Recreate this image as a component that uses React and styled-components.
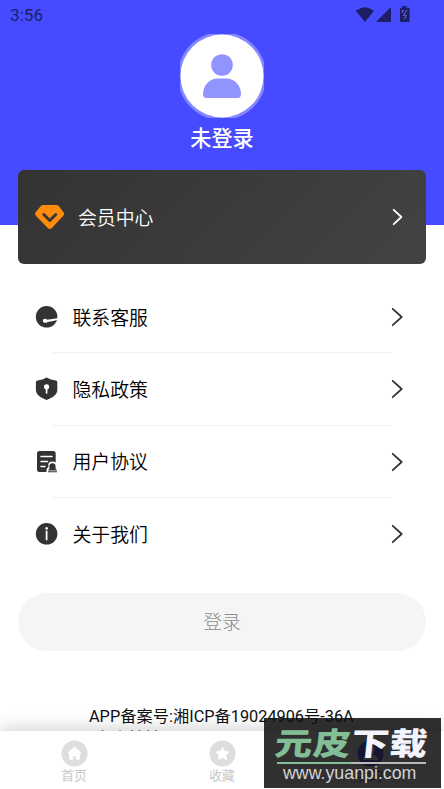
import React from "react";
import styled, { createGlobalStyle, css } from "styled-components";

const Global = createGlobalStyle`
  * { box-sizing: border-box; }
  body { margin: 0; background: #fff; font-family: Roboto, "Noto Sans CJK SC", sans-serif; }
`;

const Screen = styled.div`
  position: relative;
  display: flex;
  flex-direction: column;
  width: 444px;
  height: 789px;
  overflow: hidden;
  background: #fff;
`;
const Content = styled.main`
  flex: 1;
  min-height: 0;
  overflow: hidden;
`;
const Header = styled.header`
  height: 225px;
  background: #464bff;
  display: flex;
  flex-direction: column;
  align-items: center;
`;
const StatusBar = styled.div`
  align-self: stretch;
  height: 34px;
  padding: 0 34px 4px 10px;
  display: flex;
  align-items: center;
  justify-content: space-between;
  color: #1d1f66;
  font-size: 17.2px;
  font-weight: 450;
  svg { display: block; }
`;
const Avatar = styled.div`
  width: 84px;
  height: 84px;
  svg { display: block; }
`;
const UserName = styled.div`
  margin-top: 5px;
  line-height: 32px;
  font-size: 21.2px;
  font-weight: 500;
  color: #fff;
`;
const MemberCard = styled.section`
  position: relative;
  margin: -55px 18px 0;
  height: 94px;
  padding: 0 22px 0 17px;
  border-radius: 6px;
  background: linear-gradient(135deg, #333, #434343);
  display: flex;
  align-items: center;
  color: #fff;
`;
const label = css`
  flex: 1;
  padding-top: 3px;
  font-size: 18.85px;
  font-weight: 350;
  line-height: 28px;
`;
const CardLabel = styled.span`
  ${label}
  margin-left: 13px;
`;
const Menu = styled.ul`
  list-style: none;
  margin: 17px 18px 0;
  padding: 0;
`;
const MenuRow = styled.li`
  height: 72.3px;
  padding: 0 22px 0 17px;
  display: flex;
  align-items: center;
  color: #000;
  svg { display: block; }
`;
const MenuLabel = styled.span`
  ${label}
  margin-left: 13.5px;
`;
const Divider = styled.li`
  height: 1px;
  margin: -1px 35px 0;
  background: #f0f0f0;
`;
const LoginButton = styled.button`
  display: block;
  width: 408px;
  height: 58px;
  margin: 23px 18px 0;
  padding: 3px 0 0;
  border: 0;
  border-radius: 29px;
  background: #f5f5f5;
  color: #8c8c8c;
  font: 300 18.75px/55px Roboto, "Noto Sans CJK SC", sans-serif;
`;
const Filing = styled.p`
  width: 266px;
  margin: 55px auto 0;
  font-size: 16.3px;
  line-height: 21px;
  color: #111;
  white-space: nowrap;
`;
const FilingNote = styled.span`
  display: block;
  padding: 1px 0 0 7px;
`;
const TabBar = styled.nav`
  position: relative;
  height: 58px;
  display: grid;
  grid-template-columns: repeat(3, 1fr);
  background: #fff;
  box-shadow: 0 0 20px rgba(0, 0, 0, 0.24);
`;
const Tab = styled.div`
  padding-top: 9px;
  display: flex;
  flex-direction: column;
  align-items: center;
  font-size: 12.8px;
  line-height: 18px;
  color: ${(p) => (p.$active ? "#464bff" : "#c8c8c8")};
  svg { display: block; }
`;
const Watermark = styled.aside`
  position: absolute;
  left: 264px;
  top: 718px;
  width: 177px;
  height: 70px;
  background: rgba(14, 14, 14, 0.86);
`;
const Brand = styled.div`
  height: 43px;
  margin: 1px 0 0 11px;
  display: flex;
  align-items: center;
  font: 900 33px/43px "Noto Sans CJK SC", sans-serif;
  letter-spacing: 0.6px;
  white-space: nowrap;
  transform: translateY(2px) scale(1.14, 0.95) skewX(-5deg);
  transform-origin: left center;
  color: #f4f4ff;
`;
const Green = styled.span`
  color: #82bf97;
`;
const Rule = styled.div`
  height: 2px;
  width: 149px;
  margin-left: 13px;
  background: linear-gradient(90deg, #82bf97 50%, #bbb 50%);
`;
const Site = styled.div`
  margin-left: 19px;
  font: 17.8px/18px "Liberation Sans", sans-serif;
  color: #d4d4d4;
  white-space: nowrap;
`;

const StatusIcons = () => (
  <svg width="55" height="18" viewBox="355 6 55 18" fill="#1d1f66">
    <path d="M355.7 10.8Q365 3.5 374 10.8L365 22Z" />
    <path d="M391 7V22H376Z" />
    <path d="M402.4 6h4v1.8h2q1.2 0 1.2 1.2v12q0 1-1.2 1h-7.2q-1.2 0-1.2-1V9q0-1.2 1.2-1.2h1.2Z" />
    <path d="M402.3 13v-2.5h1.8M407 9.8l-3.6 5.6h3l-2 3.8" fill="none" stroke="#6469dc" strokeWidth="1" />
  </svg>
);
const AvatarIcon = () => (
  <svg width="84" height="84" viewBox="0 0 84 84">
    <path d="M28 0H56A44.3 44.3 0 0 1 84 28V56A44.3 44.3 0 0 1 56 84H28A44.3 44.3 0 0 1 0 56V28A44.3 44.3 0 0 1 28 0Z" fill="#8487ff" />
    <circle cx="42" cy="42" r="41.5" fill="#fff" />
    <circle cx="42" cy="31" r="10.8" fill="#9194ff" />
    <path d="M38 44.5h8c9 0 15 7.5 15 15.5q0 4-3.5 4h-31q-3.5 0-3.5-4c0-8 6-15.5 15-15.5Z" fill="#9194ff" />
  </svg>
);
const Gem = () => (
  <svg width="30" height="26" viewBox="0 0 30 26">
    <path d="M8.3 1h13q1.5 0 2.5 1.1l4.7 6.2q1.2 1.7-.2 3.4L16.8 24q-2 1.9-4 0L.9 11.7q-1.4-1.7-.2-3.4L5.8 2.1Q6.8 1 8.3 1Z" fill="#ff8c0c" />
    <path d="M8.8 10.5l6 6 6-6" fill="none" stroke="#383838" strokeWidth="3" strokeLinecap="round" strokeLinejoin="round" />
  </svg>
);
const Chevron = ({ light }) => (
  <svg width="14" height="20" viewBox="0 0 14 20" fill="none" stroke={light ? "#fff" : "#333"} strokeWidth="1.8" strokeLinecap="round" strokeLinejoin="round">
    <path d={light ? "M3.7 2.8 11.4 10 3.7 17.2" : "M2.7 1.8 11.7 10 2.7 18.2"} />
  </svg>
);
const Service = () => (
  <svg width="24" height="24" viewBox="0 0 24 24">
    <circle cx="11.6" cy="11.8" r="10.8" fill="#333" />
    <path d="M9.8 13.8q1.5-.1 2.5.9L24 13v1.6q-6 2-11.3 2.3-1.2 1.1-2.9.9a2 2 0 0 1 0-4Z" fill="#fff" />
  </svg>
);
const Shield = () => (
  <svg width="24" height="24" viewBox="0 0 24 24">
    <path d="M11.6.6Q15.5 3 20.8 3.6q1.5.2 1.5 1.8V12.8c0 5-4.3 7.8-10.7 10.2C5.3 20.6.9 17.8.9 12.8V5.4q0-1.6 1.5-1.8Q7.7 3 11.6.6Z" fill="#333" />
    <circle cx="11.6" cy="9.8" r="2.6" fill="#fff" />
    <path d="M11.6 10v5.8" stroke="#fff" strokeWidth="1.7" strokeLinecap="round" />
  </svg>
);
const Document = () => (
  <svg width="24" height="24" viewBox="0 0 24 24">
    <rect x="2" y="1" width="18.7" height="21" rx="2.5" fill="#333" />
    <path d="M6 6.6h11M6 11.5h6.5M6 16.5h4" stroke="#fff" strokeWidth="1.5" strokeLinecap="round" />
    <path d="M11.5 24v-4q0-2 2-3-1.3-5.5 4-5.5t4 5.5q2 1 2 3v4Z" fill="#fff" />
    <path d="M14.4 19v-2.7q0-3.1 3.1-3.1t3.1 3.1V19l1 .6v.8h-8.2v-.8ZM13 21.2h9v1H13Z" fill="#333" />
  </svg>
);
const Info = () => (
  <svg width="24" height="24" viewBox="0 0 24 24">
    <circle cx="11.6" cy="11.8" r="10.8" fill="#333" />
    <circle cx="11.6" cy="6.4" r="1.3" fill="#fff" />
    <path d="M11.6 9.4v8.2" stroke="#fff" strokeWidth="1.8" strokeLinecap="round" />
  </svg>
);
const TabIcon = ({ kind }) => (
  <svg width="27" height="27" viewBox="0 0 27 27">
    <circle cx="13.5" cy="13.5" r="13" fill={kind === "user" ? "#464bff" : "#dedede"} />
    {kind === "home" && <path d="M13.5 7 20 13H18.3v6.2h-3.2v-3.6h-3.2v3.6H8.7V13H7Z" fill="#fff" stroke="#fff" strokeLinejoin="round" />}
    {kind === "star" && <path d="m13.5 7.3 2 4 4.4.6-3.2 3.1.8 4.4-4-2.1-4 2.1.8-4.4-3.2-3.1 4.4-.6Z" fill="#fff" stroke="#fff" strokeLinejoin="round" />}
    {kind === "user" && <path d="M9.5 10a4 4 0 1 1 8 0 4 4 0 1 1-8 0M6 20q1-5.5 7.5-5.5T21 20Z" fill="#fff" />}
  </svg>
);

const items = [
  ["联系客服", Service],
  ["隐私政策", Shield],
  ["用户协议", Document],
  ["关于我们", Info],
];

export default function App() {
  return (
    <Screen>
      <Global />
      <Content>
        <Header>
          <StatusBar>3:56<StatusIcons /></StatusBar>
          <Avatar><AvatarIcon /></Avatar>
          <UserName>未登录</UserName>
        </Header>
        <MemberCard>
          <Gem />
          <CardLabel>会员中心</CardLabel>
          <Chevron light />
        </MemberCard>
        <Menu>
          {items.map(([text, Icon], i) => (
            <React.Fragment key={text}>
              <MenuRow><Icon /><MenuLabel>{text}</MenuLabel><Chevron /></MenuRow>
              {i < items.length - 1 && <Divider />}
            </React.Fragment>
          ))}
        </Menu>
        <LoginButton>登录</LoginButton>
        <Filing>
          APP备案号:湘ICP备19024906号-36A
          <FilingNote>备案地址:</FilingNote>
        </Filing>
      </Content>
      <TabBar>
        <Tab><TabIcon kind="home" />首页</Tab>
        <Tab><TabIcon kind="star" />收藏</Tab>
        <Tab $active><TabIcon kind="user" />我的</Tab>
      </TabBar>
      <Watermark>
        <Brand><Green>元皮</Green>下载</Brand>
        <Rule />
        <Site>www.yuanpi.com</Site>
      </Watermark>
    </Screen>
  );
}
